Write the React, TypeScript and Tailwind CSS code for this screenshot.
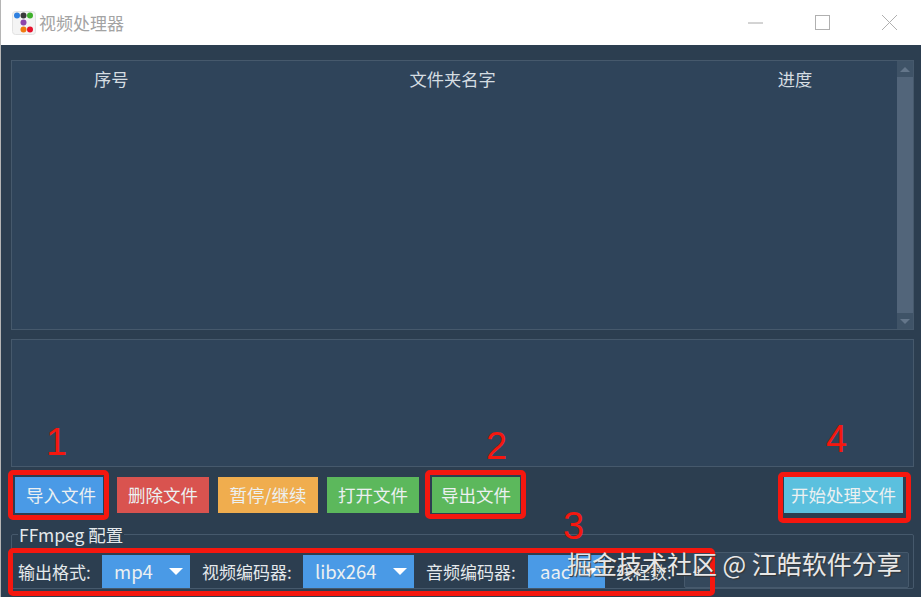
import React from 'react';

const FONT = "font-['Noto_Sans_CJK_SC','Noto_Sans',sans-serif]";

const ComboBox: React.FC<{ value: string; width: string }> = ({ value, width }) => (
  <div className={`flex h-[33px] items-center justify-between bg-[#4a9ae6] pl-3 pr-[7px] text-[18.5px] text-[#ecf0f1] ${width}`}>
    <span>{value}</span>
    <svg width="14" height="7" viewBox="0 0 14 7">
      <path d="M0 0h14L7 7z" fill="#ffffff" />
    </svg>
  </div>
);

const ActionButton: React.FC<{ label: string; color: string; width: string }> = ({ label, color, width }) => (
  <button className={`flex h-[36px] items-center justify-center text-[17.5px] text-[#ecf0f1] ${color} ${width}`}>
    {label}
  </button>
);

const AppIcon = () => (
  <svg width="24" height="24" viewBox="0 0 24 24">
    <rect x="0.5" y="0.5" width="23" height="23" rx="3" fill="#f4f4f4" stroke="#e2e2e2" />
    <circle cx="5" cy="4.5" r="3" fill="#2f80e0" />
    <circle cx="11.5" cy="4.5" r="3" fill="#3a3a3a" />
    <circle cx="18" cy="4.5" r="3" fill="#3fb02c" />
    <circle cx="11.5" cy="11.5" r="3" fill="#8e44ad" />
    <circle cx="11.5" cy="18.5" r="3" fill="#f07a10" />
    <circle cx="18" cy="18.5" r="3" fill="#e8112d" />
  </svg>
);

const App: React.FC = () => {
  return (
    <div className={`relative flex h-[597px] w-[921px] flex-col overflow-hidden border-l border-[#b5b5b5] bg-[#2c3e50] ${FONT}`}>
      {/* Title bar */}
      <div className="flex h-[45px] shrink-0 items-center bg-white pl-[11px] pr-[24px]">
        <AppIcon />
        <span className="ml-[3px] text-[17px] text-[#a3a3a3]">视频处理器</span>
        <div className="ml-auto flex items-center gap-[52px]">
          <svg width="15" height="15" viewBox="0 0 15 15"><path d="M0 8h15" stroke="#a8a8a8" /></svg>
          <svg width="15" height="15" viewBox="0 0 15 15"><rect x="0.5" y="0.5" width="14" height="14" fill="none" stroke="#b0b0b0" /></svg>
          <svg width="15" height="15" viewBox="0 0 15 15"><path d="M0 0l15 15M15 0L0 15" stroke="#b0b0b0" /></svg>
        </div>
      </div>

      <div className="flex min-h-0 flex-1 flex-col pl-[10px] pr-[7px] pt-[15px]">
        {/* Folder table */}
        <div className="flex h-[270px] shrink-0 border border-[#46596c] bg-[#2f445a]">
          <div className="flex h-[36px] flex-1 items-center text-[17.25px] text-[#d5dde2]">
            <span className="ml-[82px]">序号</span>
            <span className="ml-[281px]">文件夹名字</span>
            <span className="ml-[282px]">进度</span>
          </div>
          <div className="flex w-[16px] flex-col justify-between bg-[#52657a]">
            <div className="flex h-[16px] items-center justify-center bg-[#3f5367]">
              <svg width="10" height="5" viewBox="0 0 10 5"><path d="M5 0l5 5H0z" fill="#64768a" /></svg>
            </div>
            <div className="flex h-[16px] items-center justify-center bg-[#3f5367]">
              <svg width="10" height="5" viewBox="0 0 10 5"><path d="M0 0h10L5 5z" fill="#64768a" /></svg>
            </div>
          </div>
        </div>

        {/* Log box */}
        <div className="mt-[9px] h-[128px] shrink-0 border border-[#46596c] bg-[#2f445a]" />

        {/* Actions */}
        <div className="mt-[10px] flex shrink-0 items-center pl-[4px] pr-[11px]">
          <ActionButton label="导入文件" color="pl-[4px] bg-[#4a9ae6]" width="w-[88px]" />
          <ActionButton label="删除文件" color="ml-[14px] bg-[#d9534f]" width="w-[92px]" />
          <ActionButton label="暂停/继续" color="ml-[9px] bg-[#f0ad4e]" width="w-[100px]" />
          <ActionButton label="打开文件" color="ml-[9px] bg-[#5cb85c]" width="w-[92px]" />
          <ActionButton label="导出文件" color="ml-[13px] bg-[#5cb85c]" width="w-[88px]" />
          <ActionButton label="开始处理文件" color="ml-auto bg-[#5bc0de]" width="w-[119px]" />
        </div>

        {/* FFmpeg settings */}
        <div className="relative mt-[21px] h-[55px] shrink-0 rounded-[2px] border border-[#46596c]">
          <span className="absolute -top-[11px] left-[6px] bg-[#2c3e50] px-[1px] text-[17.5px] leading-[22px] text-[#e4e9ec]">FFmpeg 配置</span>
          <div className="flex h-full items-center pl-[6px] pt-[20px] text-[17px] text-[#e4e9ec]">
            <span className="w-[84px]">输出格式:</span>
            <ComboBox value="mp4" width="w-[88px]" />
            <span className="ml-[12px] w-[101px]">视频编码器:</span>
            <ComboBox value="libx264" width="w-[111px]" />
            <span className="ml-[12px] w-[102px]">音频编码器:</span>
            <ComboBox value="aac" width="w-[77px]" />
            <span className="ml-[11px] w-[68px]">线程数:</span>
            <div className="mr-[4px] -mt-[3px] h-[36px] flex-1 rounded-[2px] border border-[#46596c] bg-[#34485c] pl-[8px] text-[14px] leading-[34px]">4</div>
          </div>
        </div>
      </div>

      {/* Red annotations over the screenshot */}
      <div className="absolute left-[7px] top-[470px] h-[50px] w-[101px] rounded-[5px] border-[5px] border-[#f5170f]" />
      <div className="absolute left-[424px] top-[470px] h-[49px] w-[101px] rounded-[5px] border-[5px] border-[#f5170f]" />
      <div className="absolute left-[777px] top-[472px] h-[51px] w-[133px] rounded-[5px] border-[5px] border-[#f5170f]" />
      <div className="absolute left-[7px] top-[548px] h-[48px] w-[707px] rounded-[5px] border-[5px] border-[#f5170f]" />
      <span className="absolute left-[45px] top-[420px] font-['Liberation_Sans',sans-serif] text-[38px] leading-[44px] text-[#f5170f]">1</span>
      <span className="absolute left-[485px] top-[424px] font-['Liberation_Sans',sans-serif] text-[38px] leading-[44px] text-[#f5170f]">2</span>
      <span className="absolute left-[562px] top-[504px] font-['Liberation_Sans',sans-serif] text-[38px] leading-[44px] text-[#f5170f]">3</span>
      <span className="absolute left-[825px] top-[417px] font-['Liberation_Sans',sans-serif] text-[38px] leading-[44px] text-[#f5170f]">4</span>

      {/* Watermark */}
      <span className="absolute left-[566px] top-[546px] text-[25px] leading-[34px] text-[#e8e8e8] [text-shadow:1px_1px_1px_#333]">掘金技术社区 @ 江皓软件分享</span>
    </div>
  );
};

export default App;
